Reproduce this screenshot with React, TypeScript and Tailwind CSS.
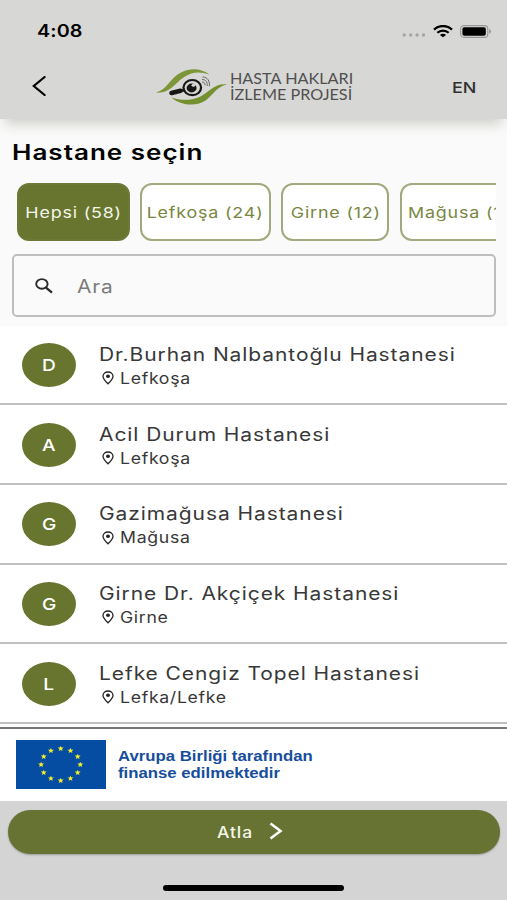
import clsx from "clsx";

const chips = [
  { label: "Hepsi (58)", width: "w-[113px]", active: true },
  { label: "Lefkoşa (24)", width: "w-[131px]", active: false },
  { label: "Girne (12)", width: "w-[108px]", active: false },
  { label: "Mağusa (14)", width: "w-[130px]", active: false },
];

const hospitals = [
  { letter: "D", name: "Dr.Burhan Nalbantoğlu Hastanesi", city: "Lefkoşa" },
  { letter: "A", name: "Acil Durum Hastanesi", city: "Lefkoşa" },
  { letter: "G", name: "Gazimağusa Hastanesi", city: "Mağusa" },
  { letter: "G", name: "Girne Dr. Akçiçek Hastanesi", city: "Girne" },
  { letter: "L", name: "Lefke Cengiz Topel Hastanesi", city: "Lefka/Lefke" },
];

const StatusBar = () => (
  <div className="flex h-[62px] items-center justify-between pl-[37px] pr-[15px]">
    <span className="mt-[2px] origin-left scale-x-[1.16] text-[17px] font-semibold tracking-[0.1px] text-black">
      4:08
    </span>
    <div className="flex items-center">
      <svg width="24" height="4" viewBox="0 0 24 4" className="mr-[7px] mt-[8px]" fill="#a5a5a4">
        <circle cx="2.2" cy="2" r="1.7" />
        <circle cx="8.7" cy="2" r="1.7" />
        <circle cx="15.1" cy="2" r="1.7" />
        <circle cx="21.5" cy="2" r="1.7" />
      </svg>
      <svg width="20" height="13" viewBox="0 0 20 13" className="mr-[7px]" fill="none" stroke="#000">
        <path d="M1 4.6C6-0.2 14-0.2 19 4.6" strokeWidth="2.3" />
        <path d="M4.3 7.8C7.6 4.8 12.4 4.8 15.7 7.8" strokeWidth="2.2" />
        <path d="M10 12.3L6.9 9.9C8.7 8.4 11.3 8.4 13.1 9.9Z" fill="#000" stroke="none" />
      </svg>
      <svg width="32" height="13" viewBox="0 0 32 13">
        <rect x="0.6" y="0.6" width="27.2" height="11.8" rx="3.4" fill="none" stroke="#979797" strokeWidth="1.1" />
        <rect x="2.4" y="2.2" width="23.4" height="8.6" rx="1.8" fill="#000" />
        <path d="M29.2 4.3C31.6 4.9 31.6 8.1 29.2 8.7Z" fill="#979797" />
      </svg>
    </div>
  </div>
);

const Logo = () => (
  <svg width="72" height="38" viewBox="0 0 72 38" fill="none">
    <path
      d="M0 24.6C11 22 14 10 25 4.6C35 -0.6 46 0.6 53.5 6.8C44 3.2 36 4 28.5 8.8C19 14.8 15 25.5 0 24.6Z"
      fill="#7d9638"
    />
    <path
      d="M71 16.6C60 14.5 53 24 44.5 28.4C36 32.6 25 33 15.5 29.4C25 38 41 38.6 50 32.2C58 26.4 60 19 71 16.6Z"
      fill="#75912f"
    />
    <path d="M29 21.8L24 23.2" stroke="#171717" strokeWidth="2.6" />
    <path d="M24.5 22.8L15.5 25" stroke="#171717" strokeWidth="4.6" strokeLinecap="round" />
    <ellipse cx="36.3" cy="19.6" rx="8.8" ry="7.6" stroke="#171717" strokeWidth="2.2" />
    <ellipse cx="35.6" cy="20" rx="5" ry="4.4" fill="#171717" />
    <ellipse cx="37.4" cy="17.2" rx="1.8" ry="1.5" fill="#d7d7d5" />
    <g stroke="#666" strokeWidth="1">
      <path d="M46 14C48 14 49 15 49 17.2" />
      <path d="M46 11.5C50 11.5 51.5 14 51.2 18" />
      <path d="M46.5 9C51.5 9 54 13 53.3 18.2" />
    </g>
  </svg>
);

const Header = () => (
  <header className="relative z-10 h-[119px] bg-[#d7d7d5] shadow-[0_10px_12px_-5px_#cdcec8]">
    <StatusBar />
    <div className="flex h-[50px] items-center pl-[32px] pr-[31px]">
      <svg width="14" height="20" viewBox="0 0 14 20" className="-mt-[2px]" fill="none" stroke="#000" strokeWidth="2.2">
        <path d="M12.6 1L1.8 10L12.6 19" strokeLinecap="round" />
      </svg>
      <div className="ml-[110px] flex items-center">
        <Logo />
        <div className="-mt-[2px] ml-[2px] w-[123px] font-['Lato'] text-[15px] leading-[16px] whitespace-nowrap text-[#505050]">
          <p className="w-fit origin-left scale-x-[1.08]">HASTA HAKLARI</p>
          <p className="w-fit origin-left scale-x-[1.08]">İZLEME PROJESİ</p>
        </div>
      </div>
      <span className="mt-[2px] ml-auto origin-right scale-x-[1.2] text-[15px] font-medium text-[#303030]">
        EN
      </span>
    </div>
  </header>
);

const PinIcon = () => (
  <svg width="12" height="14" viewBox="0 0 12 14" className="-mt-[1px]" fill="none" stroke="#222">
    <path
      d="M6 12.8C3 9.8 1 7.8 1 5.4C1 2.8 3.2 1 6 1C8.8 1 11 2.8 11 5.4C11 7.8 9 9.8 6 12.8Z"
      strokeWidth="1.3"
    />
    <ellipse cx="6" cy="5.3" rx="2" ry="1.7" fill="#222" stroke="none" />
  </svg>
);

// ring of twelve stars, slightly wider than tall like the flag itself
const stars = Array.from({ length: 12 }, (_, i) => {
  const angle = (i * Math.PI) / 6;
  return { x: 44.7 + 19.6 * Math.sin(angle), y: 24.5 - 16 * Math.cos(angle) };
});

const Flag = () => (
  <svg width="90" height="49" viewBox="0 0 90 49" className="-mt-[2px]">
    <rect width="90" height="49" fill="#044da2" />
    {stars.map((star, i) => (
      <path
        key={i}
        transform={`translate(${star.x} ${star.y})`}
        d="M0-2.6L0.9-0.9L3-0.9L1.3 0.5L1.9 2.4L0 1.4L-1.9 2.4L-1.3 0.5L-3-0.9L-0.9-0.9Z"
        fill="#f3ec2c"
      />
    ))}
  </svg>
);

const App = () => {
  return (
    <div className="flex h-[900px] w-[507px] flex-col overflow-hidden bg-white font-['Inter',sans-serif]">
      <Header />

      <section className="h-[206.5px] shrink-0 bg-[#fafafa] pt-[16px] pr-[11px] pl-[12px]">
        <h1 className="mt-[1px] w-fit origin-left scale-x-[1.24] text-[21px] leading-[33px] font-semibold tracking-[0.8px] whitespace-nowrap text-black">
          Hastane seçin
        </h1>
        <div className="mt-[14px] flex gap-[10.4px] overflow-hidden pl-[4.6px]">
          {chips.map((chip) => (
            <div
              key={chip.label}
              className={clsx(
                "flex h-[58px] shrink-0 items-center justify-center rounded-[12px] border-2",
                chip.width,
                chip.active
                  ? "border-[#6d7a37] bg-[#67752f] text-[#f4f5e9]"
                  : "border-[#a0aa7c] bg-white text-[#78863f]"
              )}
            >
              <span className="mt-[2px] scale-x-[1.19] text-[15px] tracking-[0.7px] whitespace-nowrap">
                {chip.label}
              </span>
            </div>
          ))}
        </div>
        <div className="mt-[13px] flex h-[63px] items-center rounded-[5px] border-2 border-[#bebebe] pl-[21px]">
          <svg width="18" height="16" viewBox="0 0 18 16" fill="none" stroke="#2a2a2a">
            <ellipse cx="6.9" cy="5.9" rx="5.7" ry="4.8" strokeWidth="1.9" />
            <path d="M11 9.6L17 14.7" strokeWidth="2.3" />
          </svg>
          <span className="mt-[1px] ml-[24px] origin-left scale-x-[1.16] text-[18px] tracking-[0.8px] text-[#7c7c7c]">
            Ara
          </span>
        </div>
      </section>

      <ul className="h-[401.5px] shrink-0 overflow-hidden">
        {hospitals.map((hospital) => (
          <li
            key={hospital.name}
            className="flex h-[79.7px] items-center border-b-2 border-[#c0c0c0] pl-[22px]"
          >
            <div className="mt-[1px] flex h-[44px] w-[54px] items-center justify-center rounded-[50%] bg-[#67752f]">
              <span className="mt-[1px] scale-x-[1.16] text-[16.5px] font-medium text-white">
                {hospital.letter}
              </span>
            </div>
            <div className="mt-[3px] ml-[23px] whitespace-nowrap text-[#383838]">
              <p className="w-fit origin-left scale-x-[1.165] text-[18px] leading-[26px] tracking-[0.8px]">
                {hospital.name}
              </p>
              <div className="flex items-center pl-[3px]">
                <PinIcon />
                <p className="ml-[5.5px] origin-left scale-x-[1.14] text-[15.5px] leading-[22px] tracking-[0.6px]">
                  {hospital.city}
                </p>
              </div>
            </div>
          </li>
        ))}
      </ul>

      <div className="flex h-[74px] shrink-0 items-center border-t-2 border-[#777] pl-[16px]">
        <Flag />
        <div className="-mt-[1px] ml-[11.5px] font-['Liberation_Sans'] text-[14.5px] leading-[16.5px] font-bold whitespace-nowrap text-[#164e9c]">
          <p className="w-fit origin-left scale-x-[1.155]">Avrupa Birliği tarafından</p>
          <p className="w-fit origin-left scale-x-[1.155]">finanse edilmektedir</p>
        </div>
      </div>

      <footer className="flex flex-1 flex-col items-center bg-[#d4d4d4] pt-[9px]">
        <button className="flex h-[44px] w-[492px] items-center rounded-full bg-[#667332] pl-[209px] text-[#f4f5e9] shadow-[0_1px_2px_#9a9a9a]">
          <span className="w-[52px] text-left">
            <span className="inline-block origin-left scale-x-[1.13] text-[15.5px] font-medium tracking-[0.8px]">
              Atla
            </span>
          </span>
          <svg width="14" height="18" viewBox="0 0 14 18" className="-mt-[2px]" fill="none" stroke="#fff" strokeWidth="2.6">
            <path d="M1.5 1.5L11.5 9L1.5 16.5" />
          </svg>
        </button>
        <div className="mt-[31px] h-[6px] w-[181px] rounded-full bg-black" />
      </footer>
    </div>
  );
};

export default App;
